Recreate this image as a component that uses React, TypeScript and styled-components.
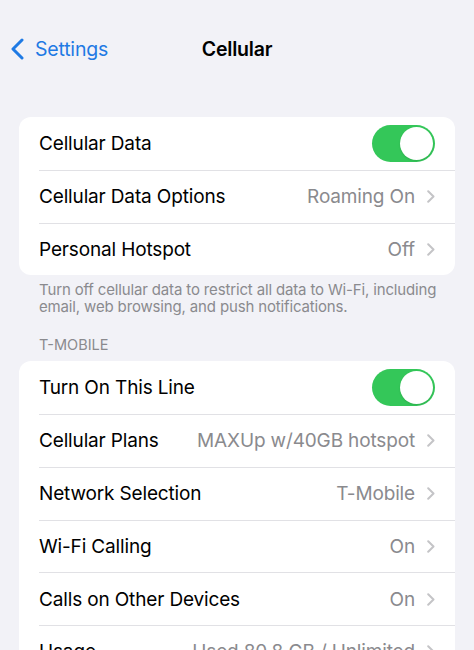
import styled, { createGlobalStyle } from "styled-components";

const GlobalStyle = createGlobalStyle`
  html, body {
    margin: 0;
    padding: 0;
    background: #f2f2f7;
    overflow: hidden;
  }
  body {
    font-family: Inter, "Liberation Sans", sans-serif;
    -webkit-font-smoothing: antialiased;
  }
`;

const Screen = styled.div`
  width: 474px;
  height: 650px;
  overflow: hidden;
  background: #f2f2f7;
`;

const NavBar = styled.div`
  display: grid;
  grid-template-columns: 1fr auto 1fr;
  align-items: center;
  height: 44px;
  margin-top: 27px;
  padding: 0 11px;
`;

const BackButton = styled.button`
  display: flex;
  align-items: center;
  gap: 11px;
  border: none;
  background: none;
  padding: 0;
  color: #1f7ae4;
  font-family: inherit;
  font-size: 19.5px;
  letter-spacing: -0.2px;
  justify-self: start;
  cursor: pointer;
`;

const Title = styled.h1`
  margin: 0;
  font-size: 19.5px;
  font-weight: 600;
  color: #000;
  letter-spacing: -0.2px;
`;

const Content = styled.div`
  padding: 46px 19px 0;
`;

const Card = styled.div`
  background: #fff;
  border-radius: 12px;
  overflow: hidden;
`;

const RowItem = styled.div<{ $first?: boolean }>`
  height: 52.75px;
  margin-left: 20px;
  box-sizing: border-box;
  border-top: ${(p) => (p.$first ? "none" : "1px solid #e1e1e5")};
`;

const Row = styled.div`
  display: flex;
  align-items: center;
  gap: 12px;
  height: 100%;
  padding-right: 20px;
`;

const Label = styled.span`
  flex: 1;
  font-size: 19px;
  color: #000;
  letter-spacing: -0.15px;
  white-space: nowrap;
`;

const Value = styled.span`
  font-size: 19px;
  color: #8a8a8e;
  letter-spacing: -0.15px;
  white-space: nowrap;
`;

const Toggle = styled.div<{ $on?: boolean }>`
  display: flex;
  justify-content: ${(p) => (p.$on ? "flex-end" : "flex-start")};
  align-items: center;
  width: 63px;
  height: 37px;
  padding: 2px;
  box-sizing: border-box;
  border-radius: 19px;
  background: ${(p) => (p.$on ? "#34c759" : "#e9e9ea")};
`;

const Knob = styled.div`
  width: 33px;
  height: 33px;
  border-radius: 50%;
  background: #fff;
  box-shadow: 0 1px 2px rgba(0, 0, 0, 0.12);
`;

const Footnote = styled.p`
  margin: 6px 8px 0 20px;
  font-size: 15px;
  line-height: 17px;
  color: #8a8a8e;
  letter-spacing: -0.15px;
`;

const SectionHeader = styled.div`
  margin: 21px 20px 8px;
  font-size: 14.5px;
  line-height: 17px;
  color: #8a8a8e;
  text-transform: uppercase;
`;

const Chevron = () => (
  <svg width="8" height="13" viewBox="0 0 8 13" fill="none">
    <path
      d="M1.2 1.2L6.5 6.5L1.2 11.8"
      stroke="#c4c4c7"
      strokeWidth="2"
      strokeLinecap="round"
      strokeLinejoin="round"
    />
  </svg>
);

const BackChevron = () => (
  <svg width="13" height="22" viewBox="0 0 13 22" fill="none">
    <path
      d="M11 2L2 11L11 20"
      stroke="#1f7ae4"
      strokeWidth="3"
      strokeLinecap="round"
      strokeLinejoin="round"
    />
  </svg>
);

type Item = { label: string; value?: string; toggle?: boolean };

const dataItems: Item[] = [
  { label: "Cellular Data", toggle: true },
  { label: "Cellular Data Options", value: "Roaming On" },
  { label: "Personal Hotspot", value: "Off" },
];

const lineItems: Item[] = [
  { label: "Turn On This Line", toggle: true },
  { label: "Cellular Plans", value: "MAXUp w/40GB hotspot" },
  { label: "Network Selection", value: "T-Mobile" },
  { label: "Wi-Fi Calling", value: "On" },
  { label: "Calls on Other Devices", value: "On" },
  { label: "Usage", value: "Used 80.8 GB / Unlimited" },
];

function SettingsGroup({ items }: { items: Item[] }) {
  return (
    <Card>
      {items.map((item, i) => (
        <RowItem key={item.label} $first={i === 0}>
          <Row>
            <Label>{item.label}</Label>
            {item.toggle ? (
              <Toggle $on>
                <Knob />
              </Toggle>
            ) : (
              <>
                <Value>{item.value}</Value>
                <Chevron />
              </>
            )}
          </Row>
        </RowItem>
      ))}
    </Card>
  );
}

export default function App() {
  return (
    <Screen>
      <GlobalStyle />
      <NavBar>
        <BackButton>
          <BackChevron />
          Settings
        </BackButton>
        <Title>Cellular</Title>
        <div />
      </NavBar>
      <Content>
        <SettingsGroup items={dataItems} />
        <Footnote>
          Turn off cellular data to restrict all data to Wi-Fi, including
          email, web browsing, and push notifications.
        </Footnote>
        <SectionHeader>T-Mobile</SectionHeader>
        <SettingsGroup items={lineItems} />
      </Content>
    </Screen>
  );
}
